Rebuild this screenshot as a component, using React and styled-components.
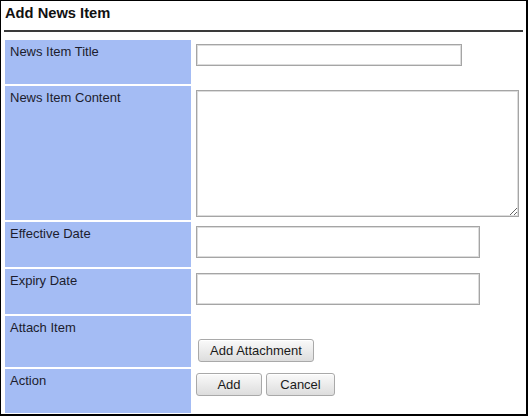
import React from "react";
import styled, { createGlobalStyle } from "styled-components";

const Global = createGlobalStyle`
  html, body { margin: 0; padding: 0; background: #fff; }
  body { font-family: "Liberation Sans", Arial, sans-serif; }
  * { box-sizing: border-box; }
`;

const Frame = styled.div`
  width: 528px;
  height: 416px;
  border-style: solid;
  border-color: #000;
  border-width: 1px 2px 2px 1px;
  background: #fff;
  padding: 0 3px 0 3px;
  overflow: hidden;
`;

const Header = styled.h2`
  margin: 0;
  font-size: 14.7px;
  font-weight: bold;
  color: #111;
  line-height: 17px;
  padding: 4px 0 8px 1px;
  border-bottom: 2px solid #3a3a3a;
  width: 519px;
`;

const Table = styled.div`
  display: flex;
  flex-direction: column;
  gap: 2px;
  margin: 8px 0 0 1px;
  width: 518px;
`;

const Row = styled.div`
  display: grid;
  grid-template-columns: 186px 1fr;
  column-gap: 1px;
  height: ${(p) => p.$h}px;
`;

const Label = styled.div`
  background: #a4bcf4;
  color: #1c1c2e;
  font-size: 13px;
  line-height: 15px;
  padding: 4px 5px;
`;

const Field = styled.div`
  background: #fff;
  padding: ${(p) => p.$pt ?? 4}px 4px 0 4px;
  display: flex;
  align-items: flex-start;
  gap: 4px;
`;

const TextInput = styled.input`
  display: block;
  width: ${(p) => p.$w}px;
  height: ${(p) => p.$hh}px;
  margin: 0;
  border: 1px solid #a5a5a5;
  box-shadow: inset 0 0 0 1px #dcdcdc;
  background: #fff;
  font: 13px "Liberation Sans", Arial, sans-serif;
  padding: 2px 4px;
  outline: none;
`;

const Area = styled.textarea`
  display: block;
  width: 323px;
  height: 127px;
  margin: 0;
  border: 1px solid #a5a5a5;
  box-shadow: inset 0 0 0 1px #dcdcdc;
  background: #fff;
  font: 13px "Liberation Sans", Arial, sans-serif;
  padding: 2px;
  outline: none;
`;

const Button = styled.button`
  height: 23px;
  width: ${(p) => p.$w}px;
  margin: 0 0 0 ${(p) => p.$ml ?? 0}px;
  padding: 0;
  font: 13px "Liberation Sans", Arial, sans-serif;
  color: #1a1a1a;
  background: linear-gradient(#fafafa, #dddddd);
  border: 1px solid #a9a9a9;
  border-radius: 3px;
  box-shadow: inset 0 1px 0 #fff;
`;

export default function App() {
  return (
    <>
      <Global />
      <Frame>
        <Header>Add News Item</Header>
        <Table>
          <Row $h={44}>
            <Label>News Item Title</Label>
            <Field>
              <TextInput $w={266} $hh={22} />
            </Field>
          </Row>
          <Row $h={134}>
            <Label>News Item Content</Label>
            <Field $pt={4}>
              <Area />
            </Field>
          </Row>
          <Row $h={45}>
            <Label>Effective Date</Label>
            <Field $pt={4}>
              <TextInput $w={284} $hh={32} />
            </Field>
          </Row>
          <Row $h={45}>
            <Label>Expiry Date</Label>
            <Field $pt={4}>
              <TextInput $w={284} $hh={32} />
            </Field>
          </Row>
          <Row $h={51}>
            <Label>Attach Item</Label>
            <Field $pt={23}>
              <Button $w={116} $ml={2}>Add Attachment</Button>
            </Field>
          </Row>
          <Row $h={44}>
            <Label>Action</Label>
            <Field $pt={4}>
              <Button $w={66}>Add</Button>
              <Button $w={69}>Cancel</Button>
            </Field>
          </Row>
        </Table>
      </Frame>
    </>
  );
}
